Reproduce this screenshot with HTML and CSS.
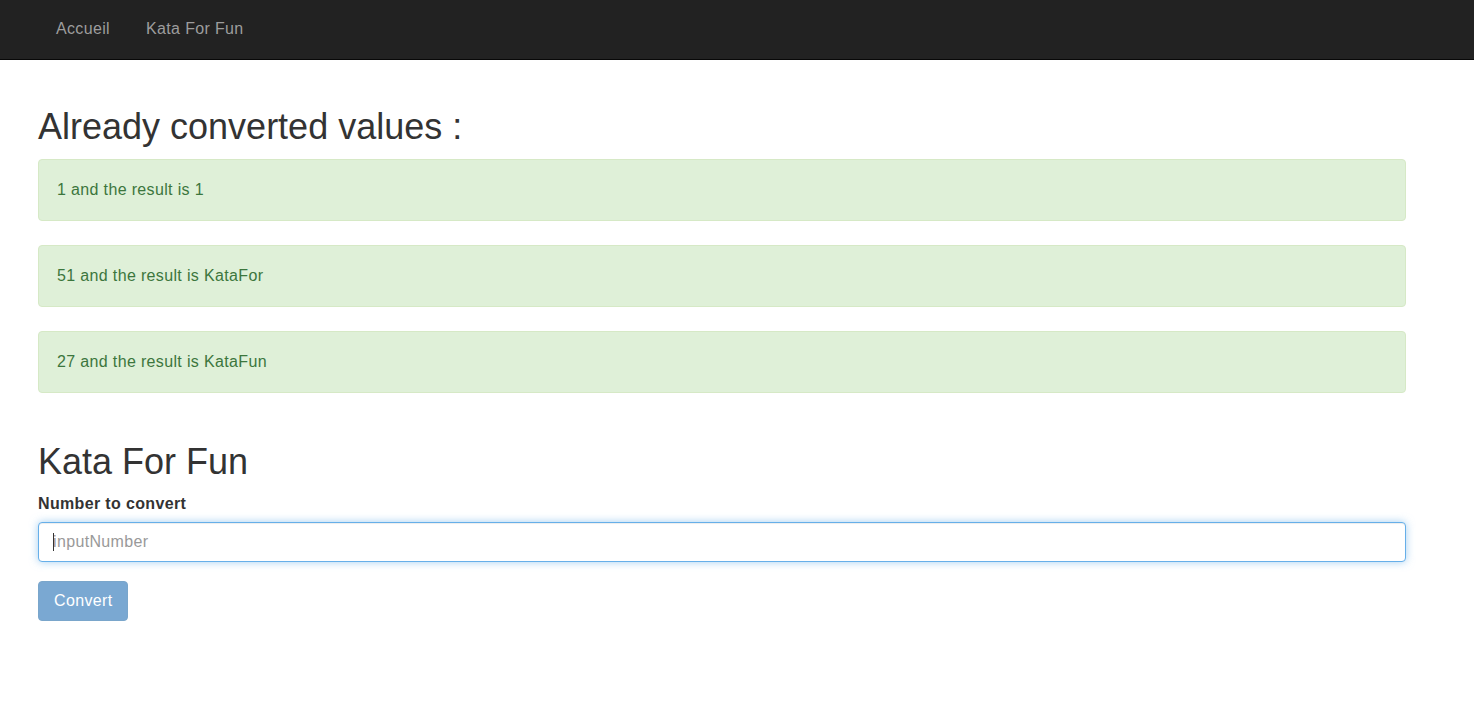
FILE: index.html
```html
<!DOCTYPE html>
<html lang="fr">
<head>
<meta charset="utf-8">
<title>Kata For Fun</title>
<link rel="stylesheet" href="styles.css">
</head>
<body>
<nav class="navbar">
  <ul class="nav">
    <li><a class="nav-link" href="#">Accueil</a></li>
    <li><a class="nav-link" href="#">Kata For Fun</a></li>
  </ul>
</nav>
<main class="content">
  <h1 class="title title-first">Already converted values :</h1>
  <div class="alerts">
    <div class="alert">1 and the result is 1</div>
    <div class="alert">51 and the result is KataFor</div>
    <div class="alert">27 and the result is KataFun</div>
  </div>
  <h1 class="title title-second">Kata For Fun</h1>
  <form class="form">
    <label class="label" for="inputNumber">Number to convert</label>
    <div class="input-wrap">
      <input class="input" id="inputNumber" type="text" placeholder="inputNumber">
      <span class="caret"></span>
    </div>
    <button class="btn" type="button" disabled>Convert</button>
  </form>
</main>
</body>
</html>
```
FILE: styles.css
```css
* { box-sizing: border-box; }
html, body { margin: 0; padding: 0; }
body {
  font-family: "Liberation Sans", Arial, sans-serif;
  font-size: 16px;
  line-height: 20px;
  color: #333;
  background: #fff;
  letter-spacing: 0.35px;
}
.navbar {
  height: 60px;
  background: #222;
  border-bottom: 1px solid #080808;
  padding: 0 38px 2px;
  display: flex;
  align-items: center;
}
.nav {
  list-style: none;
  margin: 0;
  padding: 0;
  display: flex;
}
.nav-link {
  display: block;
  padding: 0 18px;
  color: #9d9d9d;
  text-decoration: none;
  line-height: 20px;
}
.content {
  padding: 0 68px 0 38px;
}
.title {
  font-size: 36px;
  line-height: 40px;
  font-weight: 500;
  color: #333;
  margin: 0;
  letter-spacing: 0;
}
.title-first { margin-top: 47px; margin-bottom: 12px; }
.title-second { margin-top: 49px; margin-bottom: 12px; }
.alerts {
  display: flex;
  flex-direction: column;
  gap: 24px;
}
.alert {
  background: #dff0d8;
  border: 1px solid #d6e9c6;
  color: #3c763d;
  border-radius: 4px;
  padding: 20px 18px;
  line-height: 20px;
}
.form {
  display: flex;
  flex-direction: column;
  align-items: flex-start;
}
.label {
  font-weight: bold;
  line-height: 20px;
  margin-bottom: 8px;
}
.input-wrap {
  position: relative;
  width: 100%;
}
.input {
  display: block;
  width: 100%;
  height: 40px;
  padding: 0 14px;
  font-family: "Liberation Sans", Arial, sans-serif;
  font-size: 16px;
  letter-spacing: 0.35px;
  color: #555;
  background: #fff;
  border: 1px solid #66afe9;
  border-radius: 4px;
  outline: 0;
  box-shadow: inset 0 1px 1px rgba(0,0,0,.075), 0 0 8px rgba(102,175,233,.6);
}
.input::placeholder { color: #999; opacity: 1; }
.caret {
  position: absolute;
  left: 15px;
  top: 11px;
  width: 1px;
  height: 18px;
  background: #333;
}
.btn {
  margin-top: 19px;
  height: 40px;
  padding: 0 15px;
  font-family: "Liberation Sans", Arial, sans-serif;
  font-size: 16px;
  letter-spacing: 0.35px;
  color: #fff;
  background: #7aa8d2;
  border: 1px solid #7aa6cb;
  border-radius: 4px;
  cursor: not-allowed;
}
```
